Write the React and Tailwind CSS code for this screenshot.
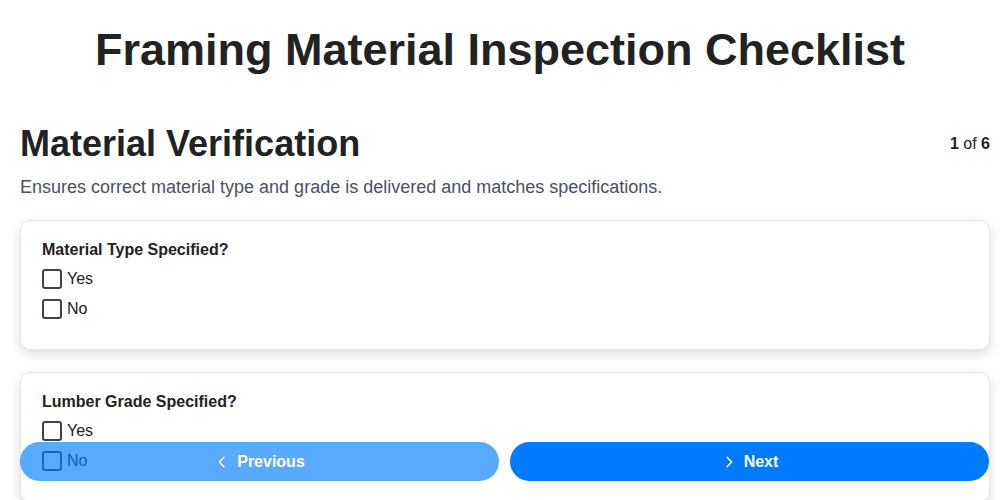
import React from "react";

function Check({ label }) {
  return (
    <label className="flex items-center gap-[5px] h-[30px]">
      <span className="w-[20px] h-[20px] border-2 border-[#3f4350] rounded-[3px] bg-white inline-block" />
      <span className="text-[16px] text-[#222]">{label}</span>
    </label>
  );
}

function Card({ q }) {
  return (
    <div className="bg-white border border-[#e6e6ea] rounded-[10px] shadow-[0_4px_12px_rgba(0,0,0,0.14)] px-[21px] pt-[20px] pb-[25px]">
      <div className="text-[16px] font-bold text-[#222] leading-[18px] mb-[5px]">{q}</div>
      <Check label="Yes" />
      <Check label="No" />
    </div>
  );
}

export default function App() {
  return (
    <div className="min-h-[500px] bg-white font-['Liberation_Sans',Arial,sans-serif] text-[#222]">
      <h1 className="text-center text-[45px] font-bold pt-[24px] leading-[52px] text-[#222]">
        Framing Material Inspection Checklist
      </h1>
      <div className="pl-[20px] pr-[10px]">
        <div className="flex items-center justify-between mt-[46px]">
          <h2 className="text-[36px] font-bold leading-[44px]">Material Verification</h2>
          <div className="text-[16px]"><b>1</b> of <b>6</b></div>
        </div>
        <p className="text-[18px] text-[#4a5160] mt-[10px] leading-[22px]">
          Ensures correct material type and grade is delivered and matches specifications.
        </p>
        <div className="flex flex-col gap-[22px] mt-[22px]">
          <Card q="Material Type Specified?" />
          <Card q="Lumber Grade Specified?" />
        </div>
      </div>
      <div className="fixed left-[20px] right-[11px] bottom-[19px] flex gap-[11px]">
        <button className="flex-1 h-[39px] rounded-full bg-[#007bff] opacity-65 text-white font-bold text-[16px] flex items-center justify-center gap-[7px]">
          <svg width="16" height="16" viewBox="0 0 24 24" fill="none" stroke="currentColor" strokeWidth="2.2" strokeLinecap="round" strokeLinejoin="round"><path d="M15 19l-7-7 7-7" /></svg>
          Previous
        </button>
        <button className="flex-1 h-[39px] rounded-full bg-[#007bff] text-white font-bold text-[16px] flex items-center justify-center gap-[7px]">
          <svg width="16" height="16" viewBox="0 0 24 24" fill="none" stroke="currentColor" strokeWidth="2.2" strokeLinecap="round" strokeLinejoin="round"><path d="M9 19l7-7-7-7" /></svg>
          Next
        </button>
      </div>
    </div>
  );
}
